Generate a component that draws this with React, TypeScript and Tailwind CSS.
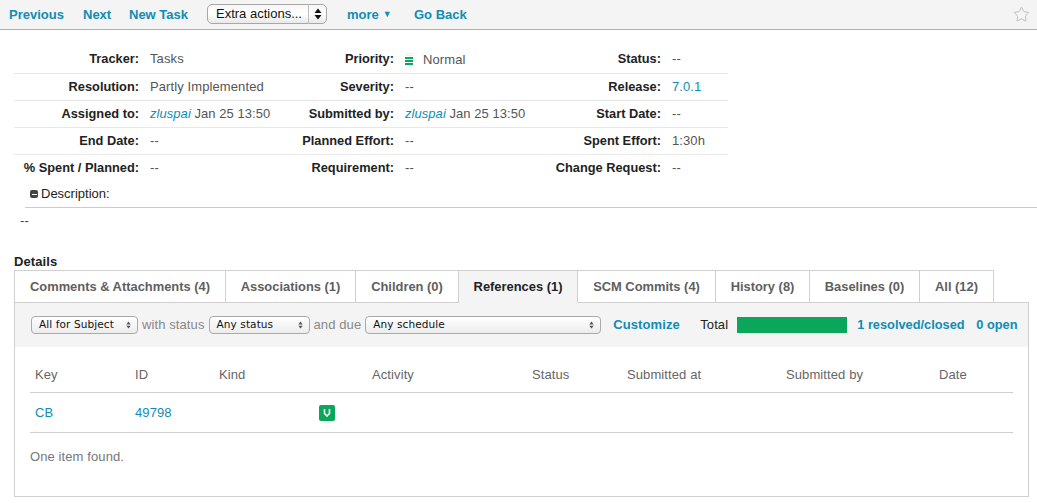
import { Star } from "lucide-react";

const fieldRows = [
  ["Tracker:", "Tasks", "Priority:", "priority", "Status:", "--"],
  ["Resolution:", "Partly Implemented", "Severity:", "--", "Release:", "release"],
  ["Assigned to:", "user", "Submitted by:", "user", "Start Date:", "--"],
  ["End Date:", "--", "Planned Effort:", "--", "Spent Effort:", "1:30h"],
  ["% Spent / Planned:", "--", "Requirement:", "--", "Change Request:", "--"],
];

const tabs = [
  { label: "Comments & Attachments (4)", width: "w-[212px]" },
  { label: "Associations (1)", width: "w-[130px]" },
  { label: "Children (0)", width: "w-[103px]" },
  { label: "References (1)", width: "w-[119px]", active: true },
  { label: "SCM Commits (4)", width: "w-[138px]" },
  { label: "History (8)", width: "w-[94px]" },
  { label: "Baselines (0)", width: "w-[110px]" },
  { label: "All (12)", width: "w-[74px]" },
];

function FieldValue({ value }: { value: string }) {
  if (value === "priority") {
    return (
      <span className="flex items-center gap-[10px] text-[#555]">
        <span className="flex flex-col gap-[1px] -mt-[1px]">
          <span className="block w-2 h-[1px] bg-[#eee]" />
          <span className="block w-2 h-[1px] bg-[#eee]" />
          <span className="block w-2 h-[2px] bg-[#0aa65a]" />
          <span className="block w-2 h-[2px] bg-[#0aa65a]" />
          <span className="block w-2 h-[2px] bg-[#0aa65a]" />
        </span>
        <span className="mt-[1px]">Normal</span>
      </span>
    );
  }
  if (value === "release") return <a className="text-[#0f8db4]">7.0.1</a>;
  if (value === "user") {
    return (
      <span className="text-[#555] whitespace-nowrap tracking-[0.05px]">
        <a className="text-[#0f8db4] italic">zluspai</a> Jan 25 13:50
      </span>
    );
  }
  return <span className="text-[#555]">{value}</span>;
}

function UpDown({ big }: { big?: boolean }) {
  return (
    <svg width={big ? 8 : 5} height={big ? 12 : 8} viewBox="0 0 8 12" className="shrink-0">
      <path d="M4 0.5 7.5 5H0.5Z M4 11.5 0.5 7H7.5Z" fill={big ? "#111" : "#555"} />
    </svg>
  );
}

function FilterSelect({ label, width }: { label: string; width: string }) {
  return (
    <div className={`${width} h-[18px] pl-[7px] pr-[6px] flex items-center justify-between rounded-[4px] border border-[#aaa] bg-gradient-to-b from-white to-[#ececec] text-[10.5px] text-[#111] font-['DejaVu_Sans',sans-serif]`}>
      <span>{label}</span>
      <UpDown />
    </div>
  );
}

export default function App() {
  return (
    <div className="w-[1037px] h-[503px] overflow-hidden bg-white font-['Liberation_Sans',Arial,sans-serif] text-[13px] tracking-[0.1px]">
      {/* Toolbar */}
      <nav className="h-[30px] bg-[#f4f4f4] border-b border-[#b0b0b0] flex items-center pl-[9px] pr-[7px] text-[13px] tracking-normal font-bold text-[#0f8db4]">
        <a className="w-[74px]">Previous</a>
        <a className="w-[46px]">Next</a>
        <a className="w-[78px]">New Task</a>
        <div className="w-[120px] h-[20px] mb-[1px] flex items-center rounded-[5px] border border-[#a8a8a8] bg-gradient-to-b from-[#f6f6f6] via-white to-[#e8e8e8] font-normal text-[#111] text-[13px]">
          <span className="w-[101px] pl-[8px] whitespace-nowrap border-r border-[#bbb]">Extra actions...</span>
          <span className="flex-1 flex justify-center"><UpDown big /></span>
        </div>
        <a className="ml-[20px] w-[67px] flex items-center gap-[4px]">
          more <span className="text-[9px]">▼</span>
        </a>
        <a>Go Back</a>
        <Star size={17} strokeWidth={1.2} className="ml-auto text-[#b4b4b4]" />
      </nav>

      {/* Fields */}
      <section className="w-[714px] ml-[14px] mt-[16px]">
        {fieldRows.map((row, i) => (
          <div
            key={row[0]}
            className={`grid grid-cols-[136px_120px_135px_125px_142px_56px] items-center border-b ${i === 0 ? "h-[28px] pb-[1px]" : "h-[27px]"} ${i < 4 ? "border-[#e8e8e8]" : "border-transparent"}`}
          >
            {row.map((cell, j) =>
              j % 2 === 0 ? (
                <span key={j} className="pr-[11px] text-right text-[12.8px] tracking-normal font-bold text-[#222] whitespace-nowrap">{cell}</span>
              ) : (
                <FieldValue key={j} value={cell} />
              )
            )}
          </div>
        ))}
      </section>

      {/* Description */}
      <div className="ml-[25px] h-[26px] pb-[1px] border-b border-[#ccc] pl-[5px] flex items-center gap-[3px] text-[#222] tracking-normal">
        <span className="w-2 h-2 rounded-[2px] bg-[#444] flex items-center justify-center">
          <span className="block w-[5px] h-[1px] bg-white" />
        </span>
        Description:
      </div>
      <p className="ml-[20px] mt-[6px] leading-[14px] text-[#444]">--</p>

      {/* Details */}
      <h3 className="ml-[14px] mt-[27px] leading-[14px] font-bold text-[#222]">Details</h3>
      <div className="ml-[14px] flex h-[33px] mt-[1px] relative z-10">
        {tabs.map((tab) => (
          <div
            key={tab.label}
            className={`${tab.width} shrink-0 flex items-center justify-center pt-[1px] border border-l-0 first:border-l border-[#d0d0d0] text-[12.9px] font-bold tracking-normal whitespace-nowrap ${tab.active ? "bg-[#f4f4f4] border-b-[#f4f4f4] text-[#222]" : "bg-white text-[#5f5f5f]"}`}
          >
            {tab.label}
          </div>
        ))}
      </div>
      <div className="ml-[14px] w-[1015px] h-[195px] -mt-[1px] border border-[#d0d0d0]">
        <div className="h-[44px] bg-[#f4f4f4] pl-[16px] flex items-center text-[#888]">
          <FilterSelect label="All for Subject" width="w-[107px]" />
          <span className="mx-[4px]">with status</span>
          <FilterSelect label="Any status" width="w-[101px]" />
          <span className="mx-[4px]">and due</span>
          <FilterSelect label="Any schedule" width="w-[236px]" />
          <a className="ml-[12px] w-[87px] mb-[1px] font-bold text-[#0f8db4]">Customize</a>
          <span className="w-[37px] text-[#222]">Total</span>
          <span className="w-[110px] h-4 bg-[#0aa65a]" />
          <a className="ml-[10px] w-[119px] text-[12.8px] tracking-normal font-bold text-[#0f8db4] whitespace-nowrap">1 resolved/closed</a>
          <a className="text-[12.8px] tracking-normal font-bold text-[#0f8db4]">0 open</a>
        </div>

        <div className="mx-[15px]">
          <div className="h-[46px] pt-[18px] grid grid-cols-[100px_84px_153px_160px_95px_159px_153px_1fr] pl-[5px] text-[#666] border-b border-[#d0d0d0]">
            <span>Key</span>
            <span>ID</span>
            <span>Kind</span>
            <span>Activity</span>
            <span>Status</span>
            <span>Submitted at</span>
            <span>Submitted by</span>
            <span>Date</span>
          </div>
          <div className="h-[40px] grid grid-cols-[100px_184px_1fr] items-center pl-[5px] text-[#0f8db4] border-b border-[#d0d0d0]">
            <a>CB</a>
            <a>49798</a>
            <span className="w-4 h-4 rounded-[2px] bg-[#0aa65a] flex items-center justify-center">
              <svg width="8" height="9" viewBox="0 0 8 9">
                <path d="M1.5 1v4.5L4 8l2.5-2.5V1" fill="none" stroke="#fff" strokeWidth="1.6" />
              </svg>
            </span>
          </div>
          <p className="mt-[14px] text-[#777]">One item found.</p>
        </div>
      </div>
    </div>
  );
}
